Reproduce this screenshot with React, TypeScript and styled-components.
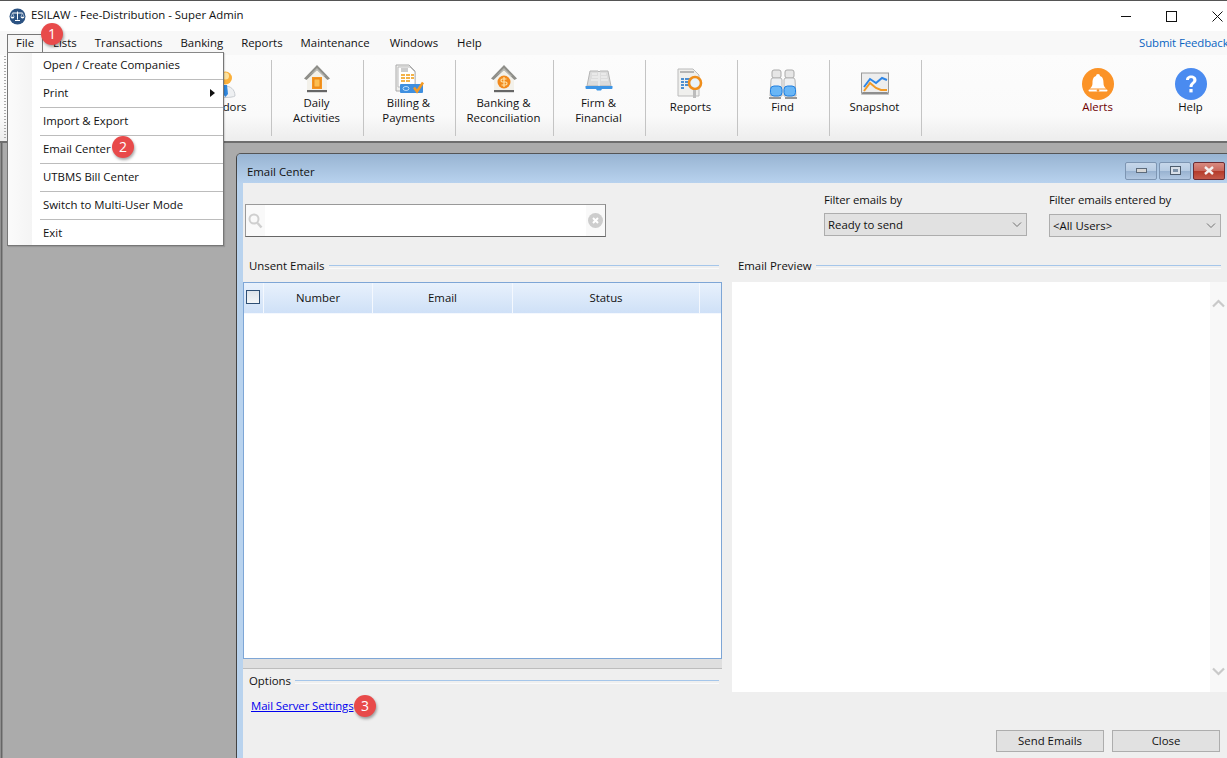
import { ReactNode } from 'react';
import styled, { createGlobalStyle } from 'styled-components';

const GlobalStyle = createGlobalStyle`
  html, body {
    margin: 0;
    padding: 0;
    width: 1227px;
    height: 758px;
    overflow: hidden;
    background: #ababab;
  }
  * {
    box-sizing: border-box;
  }
`;

const Page = styled.div`
  position: relative;
  display: flex;
  flex-direction: column;
  width: 1227px;
  height: 758px;
  overflow: hidden;
  font-family: 'Open Sans', 'Noto Sans', sans-serif;
  font-size: 11.4px;
  color: #111;
`;

const TitleBar = styled.div`
  display: flex;
  align-items: center;
  height: 31px;
  flex: none;
  padding-left: 9px;
  background: #fff;
  border-top: 1px solid #555;
`;

const TitleText = styled.span`
  margin-left: 5px;
  padding-bottom: 3px;
  flex: 1;
`;

const CaptionButton = styled.div`
  display: flex;
  align-items: center;
  justify-content: center;
  flex: none;
  width: 45.500px;
  height: 30px;
  &:last-child {
    margin-right: -13px;
  }
`;

const MenuBar = styled.div`
  display: flex;
  align-items: flex-end;
  height: 24px;
  flex: none;
  padding-left: 7px;
  background: #f8f8f8;
`;

const MenuLabel = styled.div<{ $open?: boolean; $left: number }>`
  margin-left: ${(p) => p.$left}px;
  height: ${(p) => (p.$open ? '21px' : '20px')};
  line-height: 16px;
  padding: ${(p) => (p.$open ? '0 8px' : '0')};
  background: ${(p) => (p.$open ? '#f6f6f6' : 'transparent')};
  border: ${(p) => (p.$open ? '1px solid #777' : 'none')};
  border-bottom: none;
`;

const Feedback = styled.div`
  margin-left: auto;
  width: 88px;
  height: 20px;
  line-height: 16px;
  letter-spacing: -0.1px;
  color: #0a64c2;
  white-space: nowrap;
`;

const Toolbar = styled.div`
  display: flex;
  height: 88px;
  flex: none;
  padding-left: 180px;
  overflow: hidden;
  background: linear-gradient(#fcfcfc 0%, #fafafa 70%, #eeeeee 97%);
  border-bottom: 2px solid #6e6e6e;
`;

const Grip = styled.div`
  position: absolute;
  left: 4px;
  top: 56px;
  width: 2px;
  height: 84px;
  background: repeating-linear-gradient(#aaa 0 1px, transparent 1px 3px);
`;

const ToolItem = styled.div<{ $single?: boolean; $width?: number; $divider?: boolean }>`
  display: flex;
  flex-direction: column;
  align-items: center;
  flex: none;
  width: ${(p) => p.$width ?? 92}px;
  margin: 5px 0 0;
  height: 76px;
  padding: ${(p) => (p.$single ? 8 : 4)}px 2px 0 0;
  border-right: ${(p) => (p.$divider === false ? 'none' : '1px solid #c4c4c4')};
  text-align: center;
  line-height: 15px;
`;

const ToolLabel = styled.div<{ $alert?: boolean }>`
  margin-top: -1px;
  color: ${(p) => (p.$alert ? '#6d0000' : '#111')};
`;

const ToolGap = styled.div`
  flex: none;
  width: 130px;
`;

const Workspace = styled.div`
  flex: 1;
  min-height: 0;
  padding: 10px 0 0 236px;
  background: linear-gradient(90deg, #8f8f8f 0 1px, #666 1px 2px, #8a8a8a 2px 3px, #ababab 3px);
`;

const MdiWindow = styled.div`
  display: flex;
  flex-direction: column;
  height: 620px;
  border-left: 1px solid #444;
  border-top: 1px solid #555;
  border-top-left-radius: 5px;
  overflow: hidden;
`;

const MdiTitle = styled.div`
  display: flex;
  align-items: center;
  flex: none;
  height: 29px;
  padding: 4px 2px 0 10px;
  background: linear-gradient(#98b4d2, #b8d2ee);
`;

const MdiTitleText = styled.span`
  flex: 1;
  padding-top: 2px;
`;

const MdiButton = styled.div<{ $danger?: boolean }>`
  display: flex;
  align-items: center;
  justify-content: center;
  width: 32px;
  height: 18px;
  margin-left: 2px;
  border: 1px solid ${(p) => (p.$danger ? '#6b2b33' : '#7d95b2')};
  border-radius: 2px;
  background: ${(p) =>
    p.$danger
      ? 'linear-gradient(#d88a80 0%, #c8675c 50%, #b43a2a 51%, #c4594a 100%)'
      : 'linear-gradient(#c6d7ea 0%, #b6cbe2 50%, #98b2d0 51%, #b2c8e2 100%)'};
`;

const MdiBody = styled.div`
  flex: 1;
  min-height: 0;
  display: flex;
  flex-direction: column;
  background: #efefef;
  border-left: 6px solid #b9d3ee;
`;

const FilterRow = styled.div`
  display: flex;
  flex: none;
  height: 75px;
  padding-left: 2px;
`;

const SearchBox = styled.div`
  display: flex;
  width: 361px;
  height: 33px;
  margin-top: 21px;
  background: #fff;
  border: 1px solid #999;
  border-bottom-color: #666;
  border-right-color: #888;
`;

const SearchCell = styled.div`
  display: flex;
  align-items: center;
  justify-content: center;
  flex: none;
  width: 19px;
  background: #f9f9f9;
`;

const SearchInput = styled.div`
  flex: 1;
`;

const FilterGroup = styled.div<{ $width: number; $left: number }>`
  display: flex;
  flex-direction: column;
  width: ${(p) => p.$width}px;
  margin-left: ${(p) => p.$left}px;
  padding-top: 9px;
`;

const FilterLabel = styled.div`
  height: 16px;
  line-height: 16px;
  letter-spacing: -0.1px;
`;

const Select = styled.div<{ $drop?: number }>`
  display: flex;
  align-items: center;
  justify-content: space-between;
  height: 23px;
  margin-top: ${(p) => 5 + (p.$drop ?? 0)}px;
  padding: 0 3px 1px 3px;
  background: #e1e1e1;
  border: 1px solid #adadad;
`;

const Columns = styled.div`
  display: grid;
  grid-template-columns: 479px 1fr;
  column-gap: 10px;
  flex: none;
  height: 434px;
`;

const LeftColumn = styled.div`
  display: flex;
  flex-direction: column;
  min-width: 0;
`;

const RightColumn = styled.div`
  display: flex;
  flex-direction: column;
  min-width: 0;
`;

const SectionTitle = styled.div<{ $tight?: boolean; $end?: number }>`
  display: flex;
  align-items: center;
  flex: none;
  height: ${(p) => (p.$tight ? 16 : 24)}px;
  padding: 0 ${(p) => p.$end ?? 3}px ${(p) => (p.$tight ? 0 : 10)}px 6px;
  &::after {
    content: '';
    flex: 1;
    margin: 4px 0 0 4px;
    height: 2px;
    border-top: 1px solid #a5c6ea;
    border-bottom: 1px solid #fafafa;
  }
`;

const Table = styled.div`
  flex: none;
  height: 377px;
  background: #fff;
  border: 1px solid #7ea6d6;
`;

const HeaderRow = styled.div`
  display: grid;
  grid-template-columns: 20px 109px 140px 187px 1fr;
  height: 31px;
  background: linear-gradient(#e8f1fc, #cee0f7);
`;

const HeaderCell = styled.div`
  display: flex;
  align-items: center;
  justify-content: center;
  padding-bottom: 2px;
  border-right: 1px solid #f4f8fe;
  border-bottom: 1px solid #f4f8fe;
  &:last-child {
    border-right: none;
  }
`;

const Checkbox = styled.div`
  width: 14px;
  height: 14px;
  margin-right: 1px;
  border: 1px solid #2f4f74;
  background: linear-gradient(#dfe4ea, #f4f6f8);
`;

const HScroll = styled.div`
  flex: none;
  height: 10px;
  background: #dfdfdf;
  border-bottom: 1px solid #bdbdbd;
`;

const OptionsTitle = styled.div`
  margin-top: 3px;
`;

const MailLink = styled.a`
  align-self: flex-start;
  margin: 10px 0 0 8px;
  line-height: 16px;
  letter-spacing: -0.1px;
  color: #0000ee;
  text-decoration: underline;
`;

const Preview = styled.div`
  display: flex;
  justify-content: flex-end;
  flex: none;
  height: 410px;
  background: #fff;
`;

const PreviewScroll = styled.div`
  display: flex;
  flex-direction: column;
  align-items: center;
  justify-content: space-between;
  width: 17px;
  padding: 17px 0 16px;
  background: #f8f8f8;
`;

const Footer = styled.div`
  display: flex;
  justify-content: flex-end;
  gap: 8px;
  flex: none;
  padding: 38px 7px 0 0;
`;

const PushButton = styled.div`
  width: 108px;
  height: 22px;
  line-height: 20px;
  text-align: center;
  background: #e1e1e1;
  border: 1px solid #adadad;
`;

const FileMenu = styled.div`
  position: absolute;
  left: 7px;
  top: 52px;
  width: 217px;
  height: 194px;
  padding-left: 1px;
  background: linear-gradient(90deg, #fbfbfb 0, #f4f4f4 24px, #fff 24px);
  border: 1px solid #777;
  border-top-color: #888;
  box-shadow: 1px 1px 1px rgba(0, 0, 0, 0.12);
`;

const MenuEntry = styled.div<{ $first?: boolean }>`
  position: relative;
  display: flex;
  align-items: center;
  height: 28px;
  margin-left: 31px;
  padding: 0 0 2px 3px;
  border-top: ${(p) => (p.$first ? 'none' : '1px solid #bcbcbc')};
  margin-top: ${(p) => (p.$first ? '-2px' : '0')};
`;

const Arrow = styled.span`
  position: absolute;
  right: 8px;
  top: 9px;
  width: 0;
  height: 0;
  border-left: 5px solid #111;
  border-top: 4px solid transparent;
  border-bottom: 4px solid transparent;
`;

const Badge = styled.div<{ $x: number; $y: number }>`
  position: absolute;
  left: ${(p) => p.$x - 11}px;
  top: ${(p) => p.$y - 11}px;
  width: 22px;
  height: 22px;
  border-radius: 50%;
  background: #e84a4a;
  color: #fff;
  font-size: 14px;
  line-height: 22px;
  text-align: center;
  box-shadow: 1px 2px 3px rgba(0, 0, 0, 0.35);
`;

const ScalesLogo = () => (
  <svg width="17" height="17" viewBox="0 0 17 17">
    <circle cx="8.500" cy="8.500" r="8" fill="#2b5282" />
    <path d="M8.500 3.500v8M6 12.500h5M3.500 5h10" stroke="#fff" strokeWidth="1" fill="none" />
    <path d="M1.800 9l1.700-4 1.700 4zM11.800 9l1.700-4 1.700 4z" fill="none" stroke="#dfe7f0" strokeWidth=".6" />
    <path d="M1.800 9h3.400a1.700 1.500 0 0 1-3.400 0zM11.800 9h3.400a1.700 1.500 0 0 1-3.400 0z" fill="#fff" />
  </svg>
);

const VendorIcon = () => (
  <svg width="32" height="32" viewBox="0 0 32 32">
    <path d="M6 28c0-7 5-10 10-10s10 3 10 10c-3 2-17 2-20 0z" fill="#eef0f2" stroke="#c9cdd2" />
    <path d="M15 17h3l1 9-2.500 3-2.500-3z" fill="#2f86dc" />
    <circle cx="16.500" cy="10" r="6.500" fill="#fbb03b" />
    <circle cx="16.500" cy="8" r="3.500" fill="#fde29f" />
  </svg>
);

const House = ({ children }: { children: ReactNode }) => (
  <svg width="32" height="32" viewBox="0 0 32 32">
    <path d="M6 15L16 6l10 9v12H6z" fill="#f3f1ea" />
    <path d="M3 14.500L16 1l13 13.500-2.500 1.500L16 6 5.500 16z" fill="#8e8e89" />
    <path d="M8 12L16 4l8 8-1 .5L16 6z" fill="#b9b9b4" />
    <rect x="6" y="26" width="20" height="2.200" fill="#666" />
    {children}
  </svg>
);

const DailyIcon = () => (
  <House>
    <rect x="11" y="13" width="10" height="12" fill="#f4941f" />
    <rect x="13" y="15" width="6" height="8" fill="#fdbe4f" stroke="#e57f10" strokeWidth=".8" />
  </House>
);

const BankingIcon = () => (
  <House>
    <circle cx="16" cy="18" r="6.500" fill="#f28a1d" />
    <path d="M18.500 15h-4a1.500 1.500 0 0 0 0 3h3a1.500 1.500 0 0 1 0 3h-4M16 13v10" stroke="#ffe3a8" strokeWidth="1.200" fill="none" />
  </House>
);

const BillingIcon = () => (
  <svg width="32" height="32" viewBox="0 0 32 32">
    <path d="M3 1h13l6 6v20H3z" fill="#f0f0ee" stroke="#aaa" />
    <path d="M5 3h12l5 5v15H5z" fill="#fff" stroke="#bbb" />
    <path d="M8 5h7M8 7h7" stroke="#9a9a9a" />
    <path d="M8 10h4v2H8zM13 10h4v2h-4zM18 10h3v2h-3zM8 13h4v2H8zM13 13h4v2h-4zM18 13h3v2h-3zM8 16h4v2H8zM13 16h4v2h-4z" fill="#f2b24a" />
    <rect x="7" y="20" width="23" height="9" rx="1" fill="#3f8fdf" />
    <ellipse cx="13" cy="24.500" rx="3" ry="2" fill="none" stroke="#bcdcf8" />
    <path d="M21 23.500l3 4 6-9" stroke="#f59a23" strokeWidth="2.500" fill="none" />
  </svg>
);

const BookIcon = () => (
  <svg width="32" height="32" viewBox="0 0 32 32">
    <path d="M7 7h8l1 1 1-1h8l3 15H16h-12z" fill="#dcdcdc" stroke="#b5b5b5" />
    <path d="M9 10h5M9 13h6M8 16h7M18 10h5M18 13h6M18 16h7M16 8v14" stroke="#f6f6f6" />
    <path d="M2.500 22h27v2a1 1 0 0 1-1 1H19l-1 1.500h-4L13 25H3.500a1 1 0 0 1-1-1z" fill="#3d95e6" />
  </svg>
);

const ReportsIcon = () => (
  <svg width="32" height="32" viewBox="0 0 32 32">
    <path d="M3 1h15l6 6v21H3z" fill="#efefed" stroke="#bbb" />
    <path d="M5 4h14" stroke="#b5b5b5" strokeWidth="2" />
    <path d="M6 10h3v2H6zM10 10h5v2h-5zM6 13h3v2H6zM10 13h5v2h-5zM6 16h3v2H6zM10 16h5v2h-5zM6 19h3v2H6z" fill="#4d8fd0" />
    <circle cx="20" cy="15" r="6" fill="#e8f3fc" stroke="#ef8e1c" strokeWidth="2.600" />
    <path d="M19.500 22v8" stroke="#bcbcbc" strokeWidth="3" />
  </svg>
);

const BinocularsIcon = () => (
  <svg width="32" height="32" viewBox="0 0 32 32">
    <rect x="5" y="2" width="9" height="8" rx="2" fill="#e6e6e6" stroke="#aaa" />
    <rect x="18" y="2" width="9" height="8" rx="2" fill="#e6e6e6" stroke="#aaa" />
    <path d="M4 12a2 2 0 0 1 2-2h7a2 2 0 0 1 2 2v16H3z" fill="#eef0f2" stroke="#b5b5b5" />
    <path d="M17 12a2 2 0 0 1 2-2h7a2 2 0 0 1 2 2l1 16H17z" fill="#eef0f2" stroke="#b5b5b5" />
    <rect x="3.500" y="18" width="11.500" height="10" rx="3.500" fill="#69b6f6" stroke="#1f7fe0" />
    <rect x="17" y="18" width="11.500" height="10" rx="3.500" fill="#69b6f6" stroke="#1f7fe0" />
    <path d="M2 30h12M18 30h12" stroke="#777" strokeWidth="1.500" />
  </svg>
);

const SnapshotIcon = () => (
  <svg width="32" height="32" viewBox="0 0 32 32">
    <rect x="2.500" y="5" width="27" height="20" fill="#ededed" stroke="#999" />
    <path d="M4 24h24l2 2.500H2z" fill="#8d8d8d" />
    <path d="M5 19l6-8 6 4 6-5 5 2" stroke="#2f86e6" strokeWidth="2" fill="none" />
    <path d="M5 23l6-8 6 5 5 2 6 0" stroke="#f39a25" strokeWidth="2" fill="none" />
  </svg>
);

const AlertIcon = () => (
  <svg width="32" height="32" viewBox="0 0 32 32">
    <circle cx="16" cy="16" r="16" fill="#fb9327" />
    <path d="M16 6a2 2 0 0 1 2 2c3 1 3.500 4 3.500 7 0 3 1 4 2.500 5.500H8c1.500-1.500 2.500-2.500 2.500-5.500 0-3 .5-6 3.500-7a2 2 0 0 1 2-2z" fill="#fff" />
    <path d="M7.500 21.500h17a1 1 0 0 1 0 2h-17a1 1 0 0 1 0-2z" fill="#fff" />
    <circle cx="16" cy="22.500" r="1.300" fill="#fb9327" />
  </svg>
);

const HelpIcon = () => (
  <svg width="32" height="32" viewBox="0 0 32 32">
    <circle cx="16" cy="16" r="16" fill="#4a8bf0" />
    <path d="M11 12c0-3 2.300-4.500 5.200-4.500S21.500 9 21.500 12c0 3.500-4 3.800-4 7h-3c0-4.500 3.800-4.800 3.800-7 0-1.200-.9-1.900-2.200-1.900-1.300 0-2.100.7-2.100 1.900z" fill="#fff" />
    <rect x="14.400" y="21" width="3.200" height="3.400" fill="#fff" />
  </svg>
);

const SearchIcon = () => (
  <svg width="15" height="16" viewBox="0 0 15 16">
    <circle cx="6" cy="6" r="4.500" fill="none" stroke="#cfcfcf" strokeWidth="2" />
    <path d="M9.500 10l4 4.500" stroke="#cfcfcf" strokeWidth="2.400" />
  </svg>
);

const ClearIcon = () => (
  <svg width="15" height="15" viewBox="0 0 15 15">
    <circle cx="7.500" cy="7.500" r="7.500" fill="#cdcdcd" />
    <path d="M5 5l5 5M10 5l-5 5" stroke="#fff" strokeWidth="2" />
  </svg>
);

const ChevronDown = () => (
  <svg width="12" height="7" viewBox="0 0 12 7">
    <path d="M2 1.500l4 4 4-4" fill="none" stroke="#707070" strokeWidth="1" />
  </svg>
);

const ScrollChevron = ({ up }: { up?: boolean }) => (
  <svg width="13" height="9" viewBox="0 0 13 9">
    <path d={up ? 'M1 7.500l5.500-5.500 5.500 5.500' : 'M1 1.500l5.500 5.500 5.500-5.500'} fill="none" stroke="#c9c9c9" strokeWidth="2.200" />
  </svg>
);

const tools = [
  { label: ['Vendors'], icon: <VendorIcon />, single: true },
  { label: ['Daily', 'Activities'], icon: <DailyIcon /> },
  { label: ['Billing &', 'Payments'], icon: <BillingIcon /> },
  { label: ['Banking &', 'Reconciliation'], icon: <BankingIcon />, width: 98 },
  { label: ['Firm &', 'Financial'], icon: <BookIcon /> },
  { label: ['Reports'], icon: <ReportsIcon />, single: true },
  { label: ['Find'], icon: <BinocularsIcon />, single: true },
  { label: ['Snapshot'], icon: <SnapshotIcon />, single: true },
];

const menus = [
  { label: 'Lists', left: 10 },
  { label: 'Transactions', left: 18 },
  { label: 'Banking', left: 18 },
  { label: 'Reports', left: 18 },
  { label: 'Maintenance', left: 18 },
  { label: 'Windows', left: 20 },
  { label: 'Help', left: 19 },
];

const fileEntries = [
  'Open / Create Companies',
  'Print',
  'Import & Export',
  'Email Center',
  'UTBMS Bill Center',
  'Switch to Multi-User Mode',
  'Exit',
];

const App = () => (
  <Page>
    <GlobalStyle />
    <TitleBar>
      <ScalesLogo />
      <TitleText>ESILAW - Fee-Distribution - Super Admin</TitleText>
      <CaptionButton>
        <svg width="11" height="11" viewBox="0 0 11 11">
          <path d="M0 5.500h10" stroke="#111" />
        </svg>
      </CaptionButton>
      <CaptionButton>
        <svg width="11" height="11" viewBox="0 0 11 11">
          <rect x=".5" y=".5" width="10" height="10" fill="none" stroke="#111" />
        </svg>
      </CaptionButton>
      <CaptionButton>
        <svg width="11" height="11" viewBox="0 0 11 11">
          <path d="M.5 .5l10 10M10.500 .5l-10 10" stroke="#111" />
        </svg>
      </CaptionButton>
    </TitleBar>
    <MenuBar>
      <MenuLabel $open $left={0}>
        File
      </MenuLabel>
      {menus.map((m) => (
        <MenuLabel key={m.label} $left={m.left}>
          {m.label}
        </MenuLabel>
      ))}
      <Feedback>Submit Feedback</Feedback>
    </MenuBar>
    <Toolbar>
      {tools.map((t) => (
        <ToolItem key={t.label[0]} $single={t.single} $width={t.width}>
          {t.icon}
          <ToolLabel>
            {t.label.map((line) => (
              <div key={line}>{line}</div>
            ))}
          </ToolLabel>
        </ToolItem>
      ))}
      <ToolGap />
      <ToolItem $single $width={93} $divider={false}>
        <AlertIcon />
        <ToolLabel $alert>Alerts</ToolLabel>
      </ToolItem>
      <ToolItem $single $width={93} $divider={false}>
        <HelpIcon />
        <ToolLabel>Help</ToolLabel>
      </ToolItem>
    </Toolbar>
    <Grip />
    <Workspace>
      <MdiWindow>
        <MdiTitle>
          <MdiTitleText>Email Center</MdiTitleText>
          <MdiButton>
            <svg width="11" height="5" viewBox="0 0 11 5">
              <rect x=".5" y=".5" width="10" height="4" fill="#d6d6d6" stroke="#5d6b7b" />
            </svg>
          </MdiButton>
          <MdiButton>
            <svg width="11" height="9" viewBox="0 0 11 9">
              <rect x=".5" y=".5" width="10" height="8" fill="#d8dfe8" stroke="#4d5c6d" />
              <rect x="3" y="3" width="5" height="3" fill="#7f93a9" />
            </svg>
          </MdiButton>
          <MdiButton $danger>
            <svg width="12" height="9" viewBox="0 0 12 9">
              <path d="M2 1l8 7M10 1L2 8" stroke="#f4f1f1" strokeWidth="2.400" />
            </svg>
          </MdiButton>
        </MdiTitle>
        <MdiBody>
          <FilterRow>
            <SearchBox>
              <SearchCell>
                <SearchIcon />
              </SearchCell>
              <SearchInput />
              <SearchCell>
                <ClearIcon />
              </SearchCell>
            </SearchBox>
            <FilterGroup $width={203} $left={218}>
              <FilterLabel>Filter emails by</FilterLabel>
              <Select>
                Ready to send
                <ChevronDown />
              </Select>
            </FilterGroup>
            <FilterGroup $width={172} $left={22}>
              <FilterLabel>Filter emails entered by</FilterLabel>
              <Select $drop={1}>
                {'<All Users>'}
                <ChevronDown />
              </Select>
            </FilterGroup>
          </FilterRow>
          <Columns>
            <LeftColumn>
              <SectionTitle>Unsent Emails</SectionTitle>
              <Table>
                <HeaderRow>
                  <HeaderCell>
                    <Checkbox />
                  </HeaderCell>
                  <HeaderCell>Number</HeaderCell>
                  <HeaderCell>Email</HeaderCell>
                  <HeaderCell>Status</HeaderCell>
                  <HeaderCell />
                </HeaderRow>
              </Table>
              <HScroll />
              <OptionsTitle>
                <SectionTitle $tight>Options</SectionTitle>
              </OptionsTitle>
              <MailLink>Mail Server Settings</MailLink>
            </LeftColumn>
            <RightColumn>
              <SectionTitle $end={6}>Email Preview</SectionTitle>
              <Preview>
                <PreviewScroll>
                  <ScrollChevron up />
                  <ScrollChevron />
                </PreviewScroll>
              </Preview>
            </RightColumn>
          </Columns>
          <Footer>
            <PushButton>Send Emails</PushButton>
            <PushButton>Close</PushButton>
          </Footer>
        </MdiBody>
      </MdiWindow>
    </Workspace>
    <FileMenu>
      {fileEntries.map((entry, i) => (
        <MenuEntry key={entry} $first={i === 0}>
          {entry}
          {entry === 'Print' && <Arrow />}
        </MenuEntry>
      ))}
    </FileMenu>
    <Badge $x={52} $y={34}>1</Badge>
    <Badge $x={123} $y={147}>2</Badge>
    <Badge $x={365} $y={706}>3</Badge>
  </Page>
);

export default App;
